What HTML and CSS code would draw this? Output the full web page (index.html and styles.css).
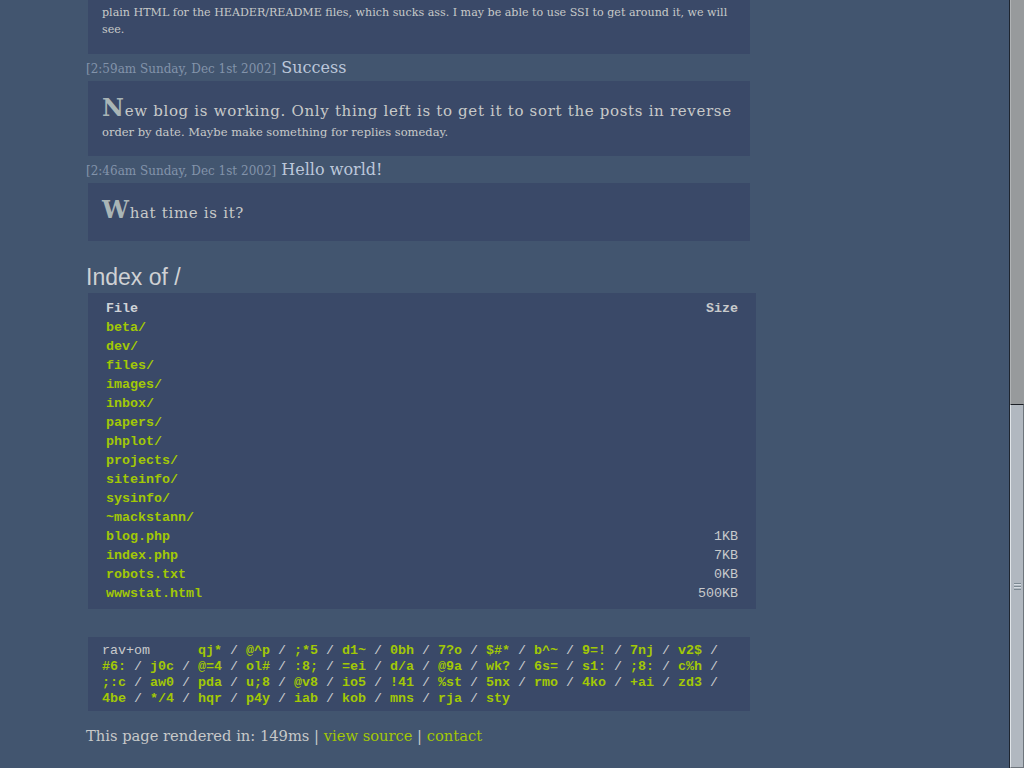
FILE: index.html
```html
<!DOCTYPE html>
<html>
<head>
<meta charset="utf-8">
<title>blog</title>
<link rel="stylesheet" href="styles.css">
</head>
<body>
<div class="page">
  <div class="entry entry-cut">
    <p class="entry-text plain">plain HTML for the HEADER/README files, which sucks ass. I may be able to use SSI to get around it, we will see.</p>
  </div>

  <div class="post-head"><span class="date">[2:59am Sunday, Dec 1st 2002]</span> <span class="title">Success</span></div>
  <div class="entry">
    <p class="entry-text">New blog is working. Only thing left is to get it to sort the posts in reverse order by date. Maybe make something for replies someday.</p>
  </div>

  <div class="post-head"><span class="date">[2:46am Sunday, Dec 1st 2002]</span> <span class="title">Hello world!</span></div>
  <div class="entry">
    <p class="entry-text">What time is it?</p>
  </div>

  <h2 class="index-title">Index of /</h2>
  <div class="listing">
    <table class="files">
      <thead>
        <tr><th class="c-name">File</th><th class="c-size">Size</th></tr>
      </thead>
      <tbody>
        <tr><td><a href="#">beta/</a></td><td class="c-size"></td></tr>
        <tr><td><a href="#">dev/</a></td><td class="c-size"></td></tr>
        <tr><td><a href="#">files/</a></td><td class="c-size"></td></tr>
        <tr><td><a href="#">images/</a></td><td class="c-size"></td></tr>
        <tr><td><a href="#">inbox/</a></td><td class="c-size"></td></tr>
        <tr><td><a href="#">papers/</a></td><td class="c-size"></td></tr>
        <tr><td><a href="#">phplot/</a></td><td class="c-size"></td></tr>
        <tr><td><a href="#">projects/</a></td><td class="c-size"></td></tr>
        <tr><td><a href="#">siteinfo/</a></td><td class="c-size"></td></tr>
        <tr><td><a href="#">sysinfo/</a></td><td class="c-size"></td></tr>
        <tr><td><a href="#">~mackstann/</a></td><td class="c-size"></td></tr>
        <tr><td><a href="#">blog.php</a></td><td class="c-size">1KB</td></tr>
        <tr><td><a href="#">index.php</a></td><td class="c-size">7KB</td></tr>
        <tr><td><a href="#">robots.txt</a></td><td class="c-size">0KB</td></tr>
        <tr><td><a href="#">wwwstat.html</a></td><td class="c-size">500KB</td></tr>
      </tbody>
    </table>
  </div>

  <div class="random"><span class="rlabel">rav+om      </span><a href="#">qj*</a>&nbsp;/ <a href="#">@^p</a>&nbsp;/ <a href="#">;*5</a>&nbsp;/ <a href="#">d1~</a>&nbsp;/ <a href="#">0bh</a>&nbsp;/ <a href="#">7?o</a>&nbsp;/ <a href="#">$#*</a>&nbsp;/ <a href="#">b^~</a>&nbsp;/ <a href="#">9=!</a>&nbsp;/ <a href="#">7nj</a>&nbsp;/ <a href="#">v2$</a>&nbsp;/ <a href="#">#6:</a>&nbsp;/ <a href="#">j0c</a>&nbsp;/ <a href="#">@=4</a>&nbsp;/ <a href="#">ol#</a>&nbsp;/ <a href="#">:8;</a>&nbsp;/ <a href="#">=ei</a>&nbsp;/ <a href="#">d/a</a>&nbsp;/ <a href="#">@9a</a>&nbsp;/ <a href="#">wk?</a>&nbsp;/ <a href="#">6s=</a>&nbsp;/ <a href="#">s1:</a>&nbsp;/ <a href="#">;8:</a>&nbsp;/ <a href="#">c%h</a>&nbsp;/ <a href="#">;:c</a>&nbsp;/ <a href="#">aw0</a>&nbsp;/ <a href="#">pda</a>&nbsp;/ <a href="#">u;8</a>&nbsp;/ <a href="#">@v8</a>&nbsp;/ <a href="#">io5</a>&nbsp;/ <a href="#">!41</a>&nbsp;/ <a href="#">%st</a>&nbsp;/ <a href="#">5nx</a>&nbsp;/ <a href="#">rmo</a>&nbsp;/ <a href="#">4ko</a>&nbsp;/ <a href="#">+ai</a>&nbsp;/ <a href="#">zd3</a>&nbsp;/ <a href="#">4be</a>&nbsp;/ <a href="#">*/4</a>&nbsp;/ <a href="#">hqr</a>&nbsp;/ <a href="#">p4y</a>&nbsp;/ <a href="#">iab</a>&nbsp;/ <a href="#">kob</a>&nbsp;/ <a href="#">mns</a>&nbsp;/ <a href="#">rja</a>&nbsp;/ <a href="#">sty</a></div>

  <p class="footer">This page rendered in: 149ms | <a href="#">view source</a> | <a href="#">contact</a></p>
</div>

<div class="scrollbar">
  <div class="sb-track"></div>
  <div class="sb-thumb"><span class="grip"></span></div>
</div>
</body>
</html>
```

FILE: styles.css
```css
html, body {
  margin: 0;
  padding: 0;
  height: 100%;
  overflow: hidden;
}
body {
  background: #42556f;
  color: #c8c9c9;
  font-family: "DejaVu Serif", "Liberation Serif", serif;
}
.page {
  width: 670px;
  padding-left: 86px;
}
.entry {
  background: #3a4968;
  margin: 0 0 0 2px;
  width: 634px;
  padding: 14px 14px 15px 14px;
}
.entry-cut {
  padding-top: 4px;
  padding-bottom: 16px;
}
.entry-text {
  margin: 0;
  font-size: 11.5px;
  line-height: 17px;
}
.entry-text::first-line {
  font-size: 15px;
  letter-spacing: 0.68px;
  line-height: 25px;
}
.entry-text::first-letter {
  font-size: 24px;
  line-height: 25px;
  font-weight: bold;
  color: #a9b5b6;
}
.plain {
  font-size: 11.1px;
}
.plain::first-line {
  font-size: 11.1px;
  letter-spacing: 0;
  line-height: 17px;
}
.plain::first-letter {
  font-size: 11.1px;
  line-height: 17px;
  font-weight: normal;
  color: inherit;
}
.post-head {
  height: 27px;
  line-height: 28px;
  white-space: nowrap;
}
.date {
  font-size: 12px;
  color: #8393aa;
}
.title {
  font-size: 16px;
  color: #bcc7da;
}
.index-title {
  margin: 24px 0 0 0;
  height: 28px;
  line-height: 24px;
  font-family: "Liberation Sans", Arial, sans-serif;
  font-weight: normal;
  font-size: 23px;
  color: #cfd1d4;
}
.listing {
  background: #3a4968;
  margin-left: 2px;
  width: 668px;
  padding: 6px 0 6px 0;
}
.files {
  width: 100%;
  border-collapse: collapse;
  font-family: "Liberation Mono", "Courier New", monospace;
  font-size: 13.33px;
}
.files th, .files td {
  padding: 0 18px;
  height: 19px;
  line-height: 19px;
  text-align: left;
  white-space: nowrap;
}
.files th {
  font-weight: bold;
  color: #d0d3d8;
}
.files .c-size {
  text-align: right;
  color: #c8cacc;
}
.files a {
  color: #a2c805;
  font-weight: bold;
  text-decoration: none;
}
.random {
  margin: 28px 0 0 2px;
  width: 634px;
  padding: 6px 14px 4px 14px;
  background: #3a4968;
  font-family: "Liberation Mono", "Courier New", monospace;
  font-size: 13.33px;
  line-height: 16px;
  color: #c8cacc;
}
.rlabel {
  white-space: pre;
}
.random a {
  color: #a2c805;
  font-weight: bold;
  text-decoration: none;
}
.footer {
  margin: 14px 0 0 0;
  font-size: 14.7px;
  line-height: 22px;
  color: #c8c9c9;
}
.footer a {
  color: #a2c805;
  text-decoration: none;
}
.scrollbar {
  position: fixed;
  top: 0;
  right: 0;
  width: 15px;
  height: 100%;
  display: flex;
  flex-direction: column;
  border-left: 1px solid #1e2530;
  box-sizing: border-box;
}
.sb-track {
  height: 404px;
  background: #979a9c;
  border-left: 1px solid #b0b3b5;
}
.sb-thumb {
  flex: 1;
  background: #b1b8c0;
  border-top: 1px solid #1b1f25;
  border-left: 1px solid #dfe4e8;
  border-right: 1px solid #6e757c;
  border-bottom: 1px solid #6e757c;
  display: flex;
  align-items: center;
  justify-content: center;
}
.grip {
  display: block;
  width: 7px;
  height: 7px;
  background: repeating-linear-gradient(to bottom, #7d8a93 0, #7d8a93 1px, #d5dce2 1px, #d5dce2 2px, transparent 2px, transparent 3px);
}
```
